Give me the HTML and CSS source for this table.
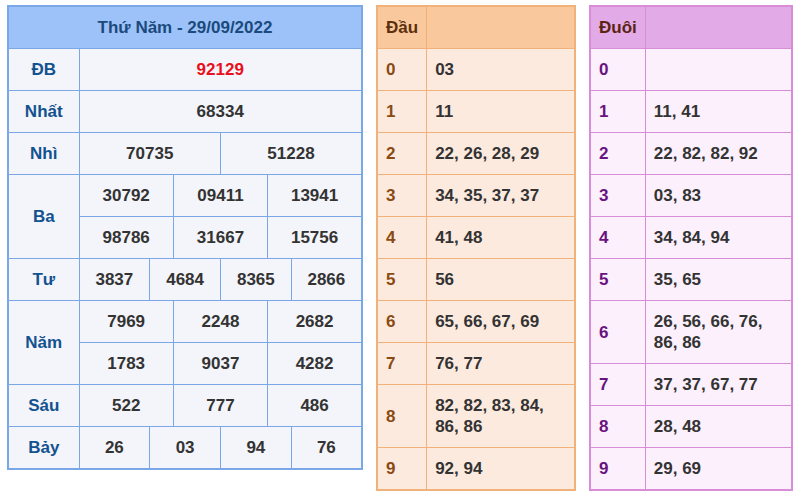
FILE: index.html
```html
<!DOCTYPE html>
<html lang="vi">
<head>
<meta charset="utf-8">
<title>Kết quả xổ số</title>
<link rel="stylesheet" href="styles.css">
</head>
<body>
<div class="page">
  <div class="box box-kq">
    <table class="kq">
      <colgroup>
        <col class="c-label">
        <col><col><col><col><col><col><col><col><col><col><col><col>
      </colgroup>
      <thead>
        <tr><th colspan="13" class="kq-head">Thứ Năm - 29/09/2022</th></tr>
      </thead>
      <tbody>
        <tr><td class="lbl">ĐB</td><td colspan="12" class="db">92129</td></tr>
        <tr><td class="lbl">Nhất</td><td colspan="12">68334</td></tr>
        <tr><td class="lbl">Nhì</td><td colspan="6">70735</td><td colspan="6">51228</td></tr>
        <tr><td class="lbl" rowspan="2">Ba</td><td colspan="4">30792</td><td colspan="4">09411</td><td colspan="4">13941</td></tr>
        <tr><td colspan="4">98786</td><td colspan="4">31667</td><td colspan="4">15756</td></tr>
        <tr><td class="lbl">Tư</td><td colspan="3">3837</td><td colspan="3">4684</td><td colspan="3">8365</td><td colspan="3">2866</td></tr>
        <tr><td class="lbl" rowspan="2">Năm</td><td colspan="4">7969</td><td colspan="4">2248</td><td colspan="4">2682</td></tr>
        <tr><td colspan="4">1783</td><td colspan="4">9037</td><td colspan="4">4282</td></tr>
        <tr><td class="lbl">Sáu</td><td colspan="4">522</td><td colspan="4">777</td><td colspan="4">486</td></tr>
        <tr><td class="lbl">Bảy</td><td colspan="3">26</td><td colspan="3">03</td><td colspan="3">94</td><td colspan="3">76</td></tr>
      </tbody>
    </table>
  </div>

  <div class="box box-dau">
    <table class="lt dau">
      <thead><tr><th>Đầu</th><th></th></tr></thead>
      <tbody>
        <tr><td class="k">0</td><td>03</td></tr>
        <tr><td class="k">1</td><td>11</td></tr>
        <tr><td class="k">2</td><td>22, 26, 28, 29</td></tr>
        <tr><td class="k">3</td><td>34, 35, 37, 37</td></tr>
        <tr><td class="k">4</td><td>41, 48</td></tr>
        <tr><td class="k">5</td><td>56</td></tr>
        <tr><td class="k">6</td><td>65, 66, 67, 69</td></tr>
        <tr><td class="k">7</td><td>76, 77</td></tr>
        <tr><td class="k">8</td><td>82, 82, 83, 84, 86, 86</td></tr>
        <tr><td class="k">9</td><td>92, 94</td></tr>
      </tbody>
    </table>
  </div>

  <div class="box box-duoi">
    <table class="lt duoi">
      <thead><tr><th>Đuôi</th><th></th></tr></thead>
      <tbody>
        <tr><td class="k">0</td><td></td></tr>
        <tr><td class="k">1</td><td>11, 41</td></tr>
        <tr><td class="k">2</td><td>22, 82, 82, 92</td></tr>
        <tr><td class="k">3</td><td>03, 83</td></tr>
        <tr><td class="k">4</td><td>34, 84, 94</td></tr>
        <tr><td class="k">5</td><td>35, 65</td></tr>
        <tr><td class="k">6</td><td>26, 56, 66, 76, 86, 86</td></tr>
        <tr><td class="k">7</td><td>37, 37, 67, 77</td></tr>
        <tr><td class="k">8</td><td>28, 48</td></tr>
        <tr><td class="k">9</td><td>29, 69</td></tr>
      </tbody>
    </table>
  </div>
</div>
</body>
</html>
```

FILE: styles.css
```css
html, body {
  margin: 0;
  padding: 0;
  background: #ffffff;
}

body {
  font-family: "Liberation Sans", Arial, sans-serif;
  font-size: 17px;
  font-weight: bold;
  color: #333333;
}

.page {
  display: flex;
  align-items: flex-start;
  gap: 13px;
  padding: 5px 6px 0 7px;
}

.box-kq { width: 356px; flex: none; }
.box-dau { width: 200px; flex: none; }
.box-duoi { width: 204px; flex: none; }

table {
  width: 100%;
  border-collapse: collapse;
  table-layout: auto;
}

th, td {
  line-height: 21px;
  padding: 10px 8px;
}

/* Result table */
.kq {
  table-layout: fixed;
  border: 2px solid #7aa7e6;
  background: #f3f5fa;
}
.kq .c-label { width: 71px; }
.kq td, .kq th {
  border: 1px solid #7aa7e6;
  text-align: center;
  padding: 10px 0;
}
.kq .kq-head {
  background: #9dc2fa;
  color: #1b4a7c;
  height: 21px;
  padding: 10px 0 10px;
}
.kq .lbl { color: #135290; }
.kq .db { color: #e8101c; }

/* Loto tables */
.lt th, .lt td { text-align: left; }
.lt td:first-child, .lt th:first-child { white-space: nowrap; }
.lt td:last-child, .lt th:last-child { width: 100%; }

.dau {
  border: 2px solid #f0b27a;
  background: #fdeadf;
}
.dau th, .dau td { border: 1px solid #f0b27a; }
.dau th { background: #f9c99d; color: #5e2f0c; }
.dau .k { color: #8a4a12; }

.duoi {
  border: 2px solid #d98cd8;
  background: #fcf0fc;
}
.duoi th, .duoi td { border: 1px solid #d98cd8; }
.duoi th { background: #e3aae8; color: #5a2410; }
.duoi .k { color: #6a127f; }
```
